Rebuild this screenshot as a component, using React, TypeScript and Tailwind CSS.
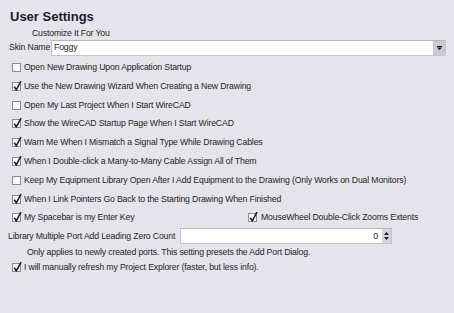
import React from "react";

const Check = ({ checked }: { checked: boolean }) => (
  <span className="relative inline-block w-[9px] h-[9px] shrink-0 border border-[#8a8b96] bg-[#fafafa]">
    {checked && (
      <svg
        className="absolute left-[-1px] top-[-3px] overflow-visible"
        width="11"
        height="12"
        viewBox="0 0 11 12"
      >
        <path d="M2.2 6.8 L4.3 9.8 L9 1.2" fill="none" stroke="#1d1d26" strokeWidth="1.6" />
      </svg>
    )}
  </span>
);

const Row = ({ checked, label }: { checked: boolean; label: string }) => (
  <div className="flex items-center h-[18.8px] pl-[12px] gap-[3px]">
    <Check checked={checked} />
    <span className="whitespace-nowrap">{label}</span>
  </div>
);

export default function App() {
  const rows: [boolean, string][] = [
    [false, "Open New Drawing Upon Application Startup"],
    [true, "Use the New Drawing Wizard When Creating a New Drawing"],
    [false, "Open My Last Project When I Start WireCAD"],
    [true, "Show the WireCAD Startup Page When I Start WireCAD"],
    [true, "Warn Me When I Mismatch a Signal Type While Drawing Cables"],
    [true, "When I Double-click a Many-to-Many Cable Assign All of Them"],
    [false, "Keep My Equipment Library Open After I Add Equipment to the Drawing (Only Works on Dual Monitors)"],
    [true, "When I Link Pointers Go Back to the Starting Drawing When Finished"],
  ];
  return (
    <div
      className="w-[454px] h-[313px] bg-[#e4e4ea] text-[#1e1e24] text-[8.7px] tracking-[-0.15px] overflow-hidden"
      style={{ fontFamily: '"Liberation Sans", Arial, sans-serif' }}
    >
      <div className="pt-[9px]">
        <div className="h-[16px] leading-[16px] pl-[10px] text-[13px] tracking-normal font-bold text-[#1c1c2a]">
          User Settings
        </div>
        <div className="mt-[2px] h-[12px] leading-[12px] pl-[32px]">Customize It For You</div>
        <div className="mt-[1px] h-[16px] flex items-center pl-[9px]">
          <span className="w-[42px] shrink-0 whitespace-nowrap">Skin Name</span>
          <div className="h-[16px] w-[395px] flex items-center bg-white border border-[#c3c3cc] border-t-[#b5b5bf]">
            <span className="pl-[2px] flex-1">Foggy</span>
            <div className="w-[12px] h-[14px] bg-[#c9cad5] flex items-center justify-center">
              <svg width="5" height="4" viewBox="0 0 5 4">
                <rect x="0" y="0" width="5" height="1" fill="#111" />
                <path d="M0 1.5 H5 L2.5 4 Z" fill="#111" />
              </svg>
            </div>
          </div>
        </div>
        <div className="mt-[2.1px]">
          {rows.map(([c, l], i) => (
            <Row key={i} checked={c} label={l} />
          ))}
          <div className="flex items-center h-[18.8px] pl-[12px]">
            <div className="w-[236px] flex items-center gap-[3px]">
              <Check checked={true} />
              <span className="whitespace-nowrap">My Spacebar is my Enter Key</span>
            </div>
            <div className="flex items-center gap-[4px]">
              <Check checked={true} />
              <span className="whitespace-nowrap">MouseWheel Double-Click Zooms Extents</span>
            </div>
          </div>
        </div>
        <div className="mt-[1px] h-[16px] flex items-center pl-[8px]">
          <span className="w-[172px] shrink-0 whitespace-nowrap">Library Multiple Port Add Leading Zero Count</span>
          <div className="h-[16px] w-[212px] flex items-center bg-white border border-[#c3c3cc] border-t-[#b5b5bf]">
            <span className="flex-1 text-right pr-[4px]">0</span>
            <div className="w-[9px] h-[14px] bg-[#d4d5de] flex flex-col items-center justify-center gap-[2px]">
              <svg width="5" height="3" viewBox="0 0 5 3">
                <path d="M0 3 H5 L2.5 0 Z" fill="#222" />
              </svg>
              <svg width="5" height="3" viewBox="0 0 5 3">
                <path d="M0 0 H5 L2.5 3 Z" fill="#222" />
              </svg>
            </div>
          </div>
        </div>
        <div className="mt-[1px] h-[14px] leading-[14px] pl-[27px] whitespace-nowrap">
          Only applies to newly created ports. This setting presets the Add Port Dialog.
        </div>
        <div className="flex items-center h-[17px] pl-[12px] gap-[3px]">
          <Check checked={true} />
          <span className="whitespace-nowrap">I will manually refresh my Project Explorer (faster, but less info).</span>
        </div>
      </div>
    </div>
  );
}
